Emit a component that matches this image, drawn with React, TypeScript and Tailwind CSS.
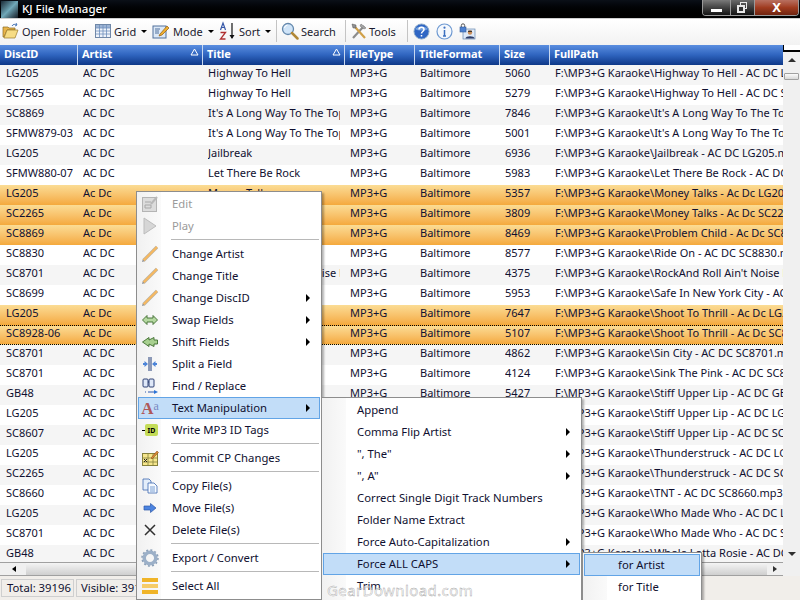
const font = "font-['Noto_Sans','Liberation_Sans',sans-serif]";

type Row = { id: string; artist: string; title: string; size: string; path: string; sel?: boolean; focus?: boolean };

const rows: Row[] = [
  { id: "LG205", artist: "AC DC", title: "Highway To Hell", size: "5060", path: "F:\\MP3+G Karaoke\\Highway To Hell - AC DC LG205.mp3" },
  { id: "SC7565", artist: "AC DC", title: "Highway To Hell", size: "5279", path: "F:\\MP3+G Karaoke\\Highway To Hell - AC DC SC7565.mp3" },
  { id: "SC8869", artist: "AC DC", title: "It's A Long Way To The Top", size: "7846", path: "F:\\MP3+G Karaoke\\It's A Long Way To The Top - AC DC" },
  { id: "SFMW879-03", artist: "AC DC", title: "It's A Long Way To The Top", size: "5001", path: "F:\\MP3+G Karaoke\\It's A Long Way To The Top - AC DC" },
  { id: "LG205", artist: "AC DC", title: "Jailbreak", size: "6936", path: "F:\\MP3+G Karaoke\\Jailbreak - AC DC LG205.mp3" },
  { id: "SFMW880-07", artist: "AC DC", title: "Let There Be Rock", size: "5983", path: "F:\\MP3+G Karaoke\\Let There Be Rock - AC DC SFMW880" },
  { id: "LG205", artist: "Ac Dc", title: "Money Talks", size: "5357", path: "F:\\MP3+G Karaoke\\Money Talks - Ac Dc LG205.mp3", sel: true },
  { id: "SC2265", artist: "Ac Dc", title: "Money Talks", size: "3809", path: "F:\\MP3+G Karaoke\\Money Talks - Ac Dc SC2265.mp3", sel: true },
  { id: "SC8869", artist: "Ac Dc", title: "Problem Child", size: "8469", path: "F:\\MP3+G Karaoke\\Problem Child - Ac Dc SC8869.mp3", sel: true },
  { id: "SC8830", artist: "AC DC", title: "Ride On", size: "8577", path: "F:\\MP3+G Karaoke\\Ride On - AC DC SC8830.mp3" },
  { id: "SC8701", artist: "AC DC", title: "Rock And Roll Ain't Noise P", size: "4375", path: "F:\\MP3+G Karaoke\\RockAnd Roll Ain't Noise Pollution" },
  { id: "SC8699", artist: "AC DC", title: "Safe In New York City", size: "5953", path: "F:\\MP3+G Karaoke\\Safe In New York City - AC DC SC8699" },
  { id: "LG205", artist: "Ac Dc", title: "Shoot To Thrill", size: "7647", path: "F:\\MP3+G Karaoke\\Shoot To Thrill - Ac Dc LG205.mp3", sel: true },
  { id: "SC8928-06", artist: "Ac Dc", title: "Shoot To Thrill", size: "5107", path: "F:\\MP3+G Karaoke\\Shoot To Thrill - Ac Dc SC8928.mp3", sel: true, focus: true },
  { id: "SC8701", artist: "AC DC", title: "Sin City", size: "4862", path: "F:\\MP3+G Karaoke\\Sin City - AC DC SC8701.mp3" },
  { id: "SC8701", artist: "AC DC", title: "Sink The Pink", size: "4124", path: "F:\\MP3+G Karaoke\\Sink The Pink - AC DC SC8701.mp3" },
  { id: "GB48", artist: "AC DC", title: "Stiff Upper Lip", size: "5427", path: "F:\\MP3+G Karaoke\\Stiff Upper Lip - AC DC GB48.mp3" },
  { id: "LG205", artist: "AC DC", title: "Stiff Upper Lip", size: "5427", path: "F:\\MP3+G Karaoke\\Stiff Upper Lip - AC DC LG205.mp3" },
  { id: "SC8607", artist: "AC DC", title: "Stiff Upper Lip", size: "5427", path: "F:\\MP3+G Karaoke\\Stiff Upper Lip - AC DC SC8607.mp3" },
  { id: "LG205", artist: "AC DC", title: "Thunderstruck", size: "5427", path: "F:\\MP3+G Karaoke\\Thunderstruck - AC DC LG205.mp3" },
  { id: "SC2265", artist: "AC DC", title: "Thunderstruck", size: "5427", path: "F:\\MP3+G Karaoke\\Thunderstruck - AC DC SC2265.mp3" },
  { id: "SC8660", artist: "AC DC", title: "TNT", size: "5427", path: "F:\\MP3+G Karaoke\\TNT - AC DC SC8660.mp3" },
  { id: "LG205", artist: "AC DC", title: "Who Made Who", size: "5427", path: "F:\\MP3+G Karaoke\\Who Made Who - AC DC LG205.mp3" },
  { id: "SC8701", artist: "AC DC", title: "Who Made Who", size: "5427", path: "F:\\MP3+G Karaoke\\Who Made Who - AC DC SC8701.mp3" },
  { id: "GB48", artist: "AC DC", title: "Whole Lotta Rosie", size: "5427", path: "F:\\MP3+G Karaoke\\Whole Lotta Rosie - AC DC GB48.mp3" },
];

const columns = [
  { name: "DiscID", w: "w-[78px]" },
  { name: "Artist", w: "w-[125px]", sort: true },
  { name: "Title", w: "w-[142px]", sort: true },
  { name: "FileType", w: "w-[70px]" },
  { name: "TitleFormat", w: "w-[85px]" },
  { name: "Size", w: "w-[50px]" },
  { name: "FullPath", w: "flex-1" },
];

function Cell({ w, children }: { w: string; children: React.ReactNode }) {
  return (
    <div className={`${w} shrink-0 pl-[5px] pr-[5px] last:pr-0`}>
      <div className="overflow-hidden whitespace-nowrap leading-[14px]">{children}</div>
    </div>
  );
}

function Sep() {
  return <div className="h-[22px] w-px shrink-0 bg-[#c4c4c4]" />;
}

function Caret() {
  return <span className="h-0 w-0 border-x-[3px] border-t-[3px] border-x-transparent border-t-black" />;
}

const FolderIcon = (
  <svg width="18" height="18" viewBox="0 0 18 18">
    <path d="M1 15V5h5l1 1h6v2H5L2 15z" fill="#e8b44a" stroke="#8a6a20" strokeWidth=".7" />
    <path d="M2 16l3-8h11l-3 8z" fill="#f6dc84" stroke="#9a7a28" strokeWidth=".7" />
    <path d="M10 4c1-2 3-2 5-1l-1-2m1 2l-2 1" fill="none" stroke="#4a78b8" strokeWidth="1" />
  </svg>
);
const GridIcon = (
  <svg width="16" height="16" viewBox="0 0 16 16">
    <rect x=".5" y="1.500" width="15" height="13" fill="#eef3fa" stroke="#7088a8" />
    <rect x="1" y="2" width="14" height="3" fill="#9db4d4" />
    <path d="M1 5h14M1 8h14M1 11h14M4.500 2v12M8 2v12M11.500 2v12" stroke="#6f8fbc" strokeWidth=".8" />
  </svg>
);
const ModeIcon = (
  <svg width="18" height="18" viewBox="0 0 18 18">
    <rect x="1" y="4" width="13" height="12" fill="#dce8f6" stroke="#50709c" />
    <path d="M3 7h5M3 9h4M3 11h4" stroke="#50709c" />
    <path d="M8 12l7-8 2 2-7 7-3 1z" fill="#f0b030" stroke="#905c10" strokeWidth=".7" />
  </svg>
);
const SortIcon = (
  <svg width="17" height="20" viewBox="0 0 17 20">
    <path d="M13 2v15" stroke="#111" strokeWidth="1.200" />
    <path d="M10.500 14l2.500 4 2.500-4z" fill="#111" />
    <path d="M1.500 9l2.500-7 2.500 7M2.500 6.500h3" fill="none" stroke="#3658a8" strokeWidth="1.200" />
    <path d="M1.500 11.500h5l-5 6.500h5" fill="none" stroke="#b03030" strokeWidth="1.300" />
  </svg>
);
const SearchIcon = (
  <svg width="18" height="18" viewBox="0 0 18 18">
    <circle cx="7" cy="7" r="5.500" fill="#cfe4f8" stroke="#6488ac" strokeWidth="1.300" />
    <path d="M3.500 6a3.500 3.500 0 0 1 3-3" fill="none" stroke="#fff" />
    <path d="M11 11l5.500 5.500" stroke="#b08838" strokeWidth="2.500" strokeLinecap="round" />
  </svg>
);
const ToolsIcon = (
  <svg width="18" height="18" viewBox="0 0 18 18">
    <path d="M3 16L14 4" stroke="#8c8c8c" strokeWidth="2.200" />
    <path d="M11 2l5 4-2 1-4-3z" fill="#a8a8a8" stroke="#666" strokeWidth=".5" />
    <path d="M15 16L5 5" stroke="#d0a048" strokeWidth="2.200" />
    <path d="M2 2l4 1v3H3z" fill="#909090" stroke="#555" strokeWidth=".5" />
  </svg>
);
const HelpIcon = (
  <svg width="17" height="17" viewBox="0 0 17 17">
    <circle cx="8.500" cy="8.500" r="7.500" fill="#2f66c4" stroke="#8aa8c8" />
    <path d="M2 6a7 4 0 0 1 13 0c-3 2-10 2-13 0z" fill="#8fb8ea" opacity=".7" />
    <path d="M6 6.500c0-3 5-3 5 0 0 2-2.500 2-2.500 4M8.500 12v1.500" fill="none" stroke="#fff" strokeWidth="1.500" />
  </svg>
);
const InfoIcon = (
  <svg width="17" height="17" viewBox="0 0 17 17">
    <circle cx="8.500" cy="8.500" r="7.500" fill="#f4f8fd" stroke="#6f9ad2" strokeWidth="1.200" />
    <path d="M8.500 7v6M7 13h3" stroke="#3c70c0" strokeWidth="1.500" />
    <circle cx="8.500" cy="4.700" r="1.100" fill="#3c70c0" />
  </svg>
);
const UserLockIcon = (
  <svg width="17" height="17" viewBox="0 0 17 17">
    <rect x="4" y="6" width="12" height="10" fill="#dfeaf8" stroke="#6688b0" strokeWidth=".7" />
    <circle cx="11" cy="9.500" r="2.200" fill="#c88c58" />
    <path d="M9 7.800h4v1H9z" fill="#222" />
    <path d="M6.500 15.500c0-3 9-3 9 0z" fill="#2c3c68" />
    <path d="M2.300 4V2.500a1.700 1.700 0 0 1 3.400 0V4" fill="none" stroke="#555" />
    <rect x="1" y="4" width="6" height="5" fill="#4c80d0" stroke="#345a98" strokeWidth=".6" />
  </svg>
);

const Pencil = (
  <svg width="18" height="18" viewBox="0 0 18 18">
    <path d="M2.500 15.500L16 2" stroke="#b8b0a0" strokeWidth="3.200" />
    <path d="M2.500 15.500L16 2" stroke="#f6b860" strokeWidth="2.200" />
    <path d="M1 17l.8-2.500 1.700 1.700z" fill="#8c8c8c" />
  </svg>
);

function DoubleArrow() {
  return (
    <svg width="16" height="12" viewBox="0 0 16 12">
      <path d="M.5 6l4.500-4.500V4h6V1.500L15.500 6 11 10.500V8H5v2.500z" fill="#b4d8a0" stroke="#3c6c2c" strokeWidth=".9" />
    </svg>
  );
}
function ShiftArrow() {
  return (
    <svg width="16" height="12" viewBox="0 0 16 12">
      <path d="M.5 6L7 1.500V4l5-2.500V4h3.500v4H12v2.500L7 8v2.500z" fill="#a8d090" stroke="#3c6c2c" strokeWidth=".9" />
    </svg>
  );
}

type MenuEntry = { label?: string; icon?: React.ReactNode; sub?: boolean; dim?: boolean; hot?: boolean };

const mainMenu: MenuEntry[] = [
  {
    label: "Edit",
    dim: true,
    icon: (
      <svg width="16" height="16" viewBox="0 0 16 16">
        <rect x=".5" y="1.500" width="14" height="14" fill="#dcdcdc" stroke="#b4b4b4" />
        <path d="M3 6h6M3 9h6v3H3z" fill="none" stroke="#a8a8a8" />
        <path d="M9 8l6-7" stroke="#b8b8b8" strokeWidth="2" />
      </svg>
    ),
  },
  {
    label: "Play",
    dim: true,
    icon: (
      <svg width="14" height="18" viewBox="0 0 14 18">
        <path d="M1 1l12 8-12 8z" fill="#d6d6d6" stroke="#bcbcbc" />
      </svg>
    ),
  },
  {},
  { label: "Change Artist", icon: Pencil },
  { label: "Change Title", icon: Pencil },
  { label: "Change DiscID", icon: Pencil, sub: true },
  { label: "Swap Fields", icon: <DoubleArrow />, sub: true },
  { label: "Shift Fields", icon: <ShiftArrow />, sub: true },
  {
    label: "Split a Field",
    icon: (
      <svg width="16" height="16" viewBox="0 0 16 16">
        <path d="M7 1v14M9 1v14" stroke="#223c78" />
        <path d="M6 8L2.500 5v2H1v2h1.500v2zM10 8l3.500-3v2H15v2h-1.500v2z" fill="#4c84d8" />
      </svg>
    ),
  },
  {
    label: "Find / Replace",
    icon: (
      <svg width="17" height="17" viewBox="0 0 17 17">
        <rect x="1" y="1" width="5" height="8" rx="1" fill="#dfe8f8" stroke="#1c3068" strokeWidth=".9" />
        <rect x="7" y="1" width="5" height="8" rx="1" fill="#dfe8f8" stroke="#1c3068" strokeWidth=".9" />
        <path d="M6 4h1" stroke="#1c3068" />
        <path d="M3 14h1M6 14h6" stroke="#2c58b0" />
        <path d="M12 12l4 2-4 2z" fill="#2c74d8" />
      </svg>
    ),
  },
  {
    label: "Text Manipulation",
    sub: true,
    hot: true,
    icon: (
      <span className="flex items-start font-['Liberation_Serif',serif] leading-none">
        <span className="text-[17px] font-bold text-[#b05858]">A</span>
        <span className="text-[12px] text-[#7888c0]">a</span>
      </span>
    ),
  },
  {
    label: "Write MP3 ID Tags",
    icon: (
      <span className="flex items-center">
        <span className="h-px w-[3px] bg-black" />
        <span className="flex h-[12px] w-[13px] items-center justify-center rounded-[2px] bg-[#c4dc58] text-[7px] font-bold text-black">
          ID
        </span>
      </span>
    ),
  },
  {},
  {
    label: "Commit CP Changes",
    icon: (
      <svg width="17" height="17" viewBox="0 0 17 17">
        <rect x=".5" y="3.500" width="15" height="12" fill="#f6e68c" stroke="#85803c" />
        <path d="M1 8h15M1 12h15M6 4v11M11 4v11" stroke="#85803c" strokeWidth=".8" />
        <path d="M2 9l3 3M5 9l-3 3" stroke="#222" />
        <path d="M9 8l6-7 1.500 1.500L10 9z" fill="#d88a38" stroke="#804010" strokeWidth=".5" />
      </svg>
    ),
  },
  {},
  {
    label: "Copy File(s)",
    icon: (
      <svg width="16" height="16" viewBox="0 0 16 16">
        <path d="M1 1h6l2 2v9H1z" fill="#e4eefa" stroke="#3c68b0" strokeWidth=".8" />
        <path d="M6 5h6l3 3v7H6z" fill="#f6faff" stroke="#3c68b0" strokeWidth=".8" />
        <path d="M8 9h5M8 11h5M8 13h5" stroke="#5c88c8" strokeWidth=".8" />
      </svg>
    ),
  },
  {
    label: "Move File(s)",
    icon: (
      <svg width="14" height="12" viewBox="0 0 14 12">
        <path d="M1 4h6.500V1.500L13 6l-5.500 4.500V8H1z" fill="#4c84e0" stroke="#2c58a8" strokeWidth=".7" />
      </svg>
    ),
  },
  {
    label: "Delete File(s)",
    icon: (
      <svg width="14" height="14" viewBox="0 0 14 14">
        <path d="M2 2l10 10M12 2L2 12" stroke="#303030" strokeWidth="1.500" />
      </svg>
    ),
  },
  {},
  {
    label: "Export / Convert",
    icon: (
      <svg width="18" height="18" viewBox="0 0 18 18">
        <circle cx="9" cy="9" r="5.800" fill="none" stroke="#9cb0c8" strokeWidth="3.500" />
        <circle cx="9" cy="9" r="8" fill="none" stroke="#8ca0b8" strokeWidth="1.500" strokeDasharray="2 2.200" />
      </svg>
    ),
  },
  {},
  {
    label: "Select All",
    icon: (
      <span className="flex h-[16px] w-[16px] flex-col justify-between">
        <span className="h-[4px] bg-[#f0b428]" />
        <span className="h-[4px] bg-[#f6cc68]" />
        <span className="h-[4px] bg-[#f0b428]" />
      </span>
    ),
  },
];

const textMenu: MenuEntry[] = [
  { label: "Append" },
  { label: "Comma Flip Artist", sub: true },
  { label: '", The"', sub: true },
  { label: '", A"', sub: true },
  { label: "Correct Single Digit Track Numbers" },
  { label: "Folder Name Extract" },
  { label: "Force Auto-Capitalization", sub: true },
  { label: "Force ALL CAPS", sub: true, hot: true },
  { label: "Trim" },
];

const capsMenu: MenuEntry[] = [{ label: "for Artist", hot: true }, { label: "for Title" }];

function Menu({ items, cls }: { items: MenuEntry[]; cls: string }) {
  return (
    <div className={`absolute flex flex-col border border-[#8d8d8d] bg-white p-px text-[11.3px] text-[#101030] shadow-[2px_2px_2px_rgba(0,0,0,0.3)] ${cls}`}>
      <div className="absolute bottom-0 left-0 top-0 w-[24px] bg-gradient-to-r from-[#f1f1f1] to-[#fafafa]" />
      {items.map((it, i) =>
        it.label ? (
          <div
            key={i}
            className={`relative flex h-[22px] shrink-0 items-center ${it.hot ? "bg-[#c2ddf8] shadow-[inset_0_0_0_1px_#62a4e6]" : ""} ${it.dim ? "text-[#9a9a9a]" : ""}`}
          >
            <span className="flex h-full w-[24px] items-center justify-center">{it.icon}</span>
            <span className="ml-[10px] whitespace-nowrap">{it.label}</span>
            {it.sub && (
              <span className="absolute right-[10px] h-0 w-0 border-y-[4px] border-l-[4px] border-y-transparent border-l-black" />
            )}
          </div>
        ) : (
          <div key={i} className="relative my-[2px] ml-[33px] mr-px h-[2px] shrink-0 border-t border-[#b8b8b8]" />
        ),
      )}
    </div>
  );
}

export default function App() {
  return (
    <div className={`relative flex h-[600px] w-[800px] flex-col overflow-hidden bg-[#f0f0f0] text-[11px] leading-none text-[#101030] ${font}`}>
      {/* title bar */}
      <div className="flex h-[19px] shrink-0 items-center border-b border-[#cfcfcf] bg-gradient-to-b from-[#0b1018] to-[#000] text-white">
        <div className="ml-[1px] h-[17px] w-[17px] bg-gradient-to-br from-[#1c2c38] via-[#70a8b8] to-[#182028]" />
        <span className="ml-[4px] text-[11.5px] font-medium">KJ File Manager</span>
        <div className="ml-auto mr-[1px] flex h-[16px] self-start overflow-hidden rounded-b-[4px] border border-t-0 border-[#9a9a9a]">
          <div className="flex w-[27px] items-end justify-center bg-gradient-to-b from-[#7a7a7a] to-[#141414] pb-[3px]">
            <span className="h-[3px] w-[11px] bg-white" />
          </div>
          <div className="relative flex w-[25px] items-center justify-center border-x border-[#9a9a9a] bg-gradient-to-b from-[#6a6a6a] to-[#141414]">
            <span className="absolute left-[9px] top-[2px] h-[7px] w-[7px] border border-[#e8e8e8]" />
            <span className="absolute left-[6px] top-[5px] h-[8px] w-[8px] border-2 border-[#e8e8e8] bg-[#333]" />
          </div>
          <div className="flex w-[43px] items-center justify-center bg-gradient-to-b from-[#b87060] via-[#a03c20] to-[#702410] text-[13px] font-bold text-white">
            X
          </div>
        </div>
      </div>

      {/* toolbar */}
      <div className="flex h-[26px] shrink-0 items-center whitespace-nowrap bg-gradient-to-b from-white to-[#f2f2f2] pb-[2px] pl-[2px] text-[#1a1a2e]">
        {FolderIcon}
        <span className="ml-[2px] w-[64px]">Open Folder</span>
        <span className="ml-[9px]">{GridIcon}</span>
        <span className="ml-[3px] w-[27px]">Grid</span>
        <Caret />
        <span className="ml-[5px]">{ModeIcon}</span>
        <span className="ml-[3px] w-[35px]">Mode</span>
        <Caret />
        <span className="ml-[5px]">{SortIcon}</span>
        <span className="ml-[3px] w-[26px]">Sort</span>
        <Caret />
        <span className="ml-[5px]"><Sep /></span>
        <span className="ml-[4px]">{SearchIcon}</span>
        <span className="ml-[2px] w-[44px]">Search</span>
        <Sep />
        <span className="ml-[4px]">{ToolsIcon}</span>
        <span className="ml-[1px] w-[38px]">Tools</span>
        <Sep />
        <div className="ml-[5px] flex items-center gap-[6px]">
          {HelpIcon}
          {InfoIcon}
          {UserLockIcon}
        </div>
      </div>

      {/* grid + vertical scrollbar */}
      <div className="flex h-[531px] shrink-0">
        <div className="flex w-[783px] shrink-0 flex-col">
          <div className="flex h-[20px] shrink-0 bg-gradient-to-b from-[#5a8ee0] via-[#2f64bf] to-[#0e3888] font-bold text-white">
            {columns.map((c) => (
              <div key={c.name} className={`relative flex ${c.w} shrink-0 items-center border-r border-[#c8d8f0] pb-[3px] pl-[4px] tracking-[-0.1px] last:border-r-0`}>
                {c.name}
                {c.sort && (
                  <svg className="absolute right-[3px] top-[3px]" width="9" height="8" viewBox="0 0 9 8">
                    <path d="M4.500 1L8 7H1z" fill="none" stroke="#fff" />
                  </svg>
                )}
              </div>
            ))}
          </div>
          <div className="h-[497px] shrink-0 overflow-hidden">
            {rows.map((r, i) => (
              <div
                key={i}
                className={`flex h-[20px] items-center pb-[5px] ${
                  r.sel
                    ? "bg-gradient-to-b from-[#fbdc94] to-[#f4a93c]"
                    : i % 2 === 0
                      ? "bg-[#f5f5f5]"
                      : "bg-white"
                } ${r.focus ? "border-y border-dotted border-black" : ""}`}
              >
                <Cell w="w-[78px]"><span className="ml-px">{r.id}</span></Cell>
                <Cell w="w-[125px]">{r.artist}</Cell>
                <Cell w="w-[142px]">{r.title}</Cell>
                <Cell w="w-[70px]">MP3+G</Cell>
                <Cell w="w-[85px]">Baltimore</Cell>
                <Cell w="w-[50px]">{r.size}</Cell>
                <Cell w="flex-1">{r.path}</Cell>
              </div>
            ))}
          </div>
          {/* horizontal scrollbar */}
          <div className="flex h-[14px] shrink-0 items-center border-y border-[#a0a0a0] bg-[#f0f0f0] pl-[12px]">
            <span className="h-0 w-0 border-y-[3px] border-r-[4px] border-y-transparent border-r-black" />
            <div className="ml-[10px] h-full flex-1 bg-gradient-to-b from-[#f4f4f4] to-[#cfcfcf]" />
            <span className="ml-[6px] mr-[6px] h-0 w-0 border-y-[3px] border-l-[4px] border-y-transparent border-l-[#303030]" />
          </div>
        </div>
        <div className="flex flex-1 flex-col items-center bg-[#f0f0f0]">
          <div className="h-[7px] w-full shrink-0 border-b-2 border-l border-black bg-white" />
          <span className="mt-[6px] h-0 w-0 shrink-0 border-x-[4px] border-b-[4px] border-x-transparent border-b-[#303030]" />
          <div className="mt-[11px] h-[7px] w-[15px] shrink-0 rounded-[1px] border border-[#a0a0a0] bg-gradient-to-b from-[#fbfbfb] to-[#d8d8d8]" />
          <span className="mb-[20px] mt-auto h-0 w-0 shrink-0 border-x-[4px] border-t-[4px] border-x-transparent border-t-[#303030]" />
        </div>
      </div>

      {/* status bar */}
      <div className="flex h-[24px] shrink-0 items-center gap-[2px] whitespace-nowrap bg-[#f1eeea] pl-[1px] text-[11.3px]">
        <div className="flex h-[18px] w-[73px] items-center border border-[#cfcfcf] pl-[5px]">Total: 39196</div>
        <div className="flex h-[18px] w-[100px] items-center border border-[#cfcfcf] pl-[4px]">Visible: 39196</div>
      </div>

      {/* context menus */}
      <Menu items={mainMenu} cls="left-[136px] top-[191px] w-[186px] pb-[2px]" />
      <Menu items={textMenu} cls="left-[321px] top-[397px] w-[261px] pb-[4px]" />
      <Menu items={capsMenu} cls="left-[582px] top-[552px] w-[120px] pb-[4px]" />
      <span className="absolute left-[327px] top-[583px] whitespace-nowrap text-[15px] tracking-[0.4px] text-white/60 small-caps [-webkit-text-stroke:0.4px_#a0a0a0]">
        GearDownload.com
      </span>
    </div>
  );
}
